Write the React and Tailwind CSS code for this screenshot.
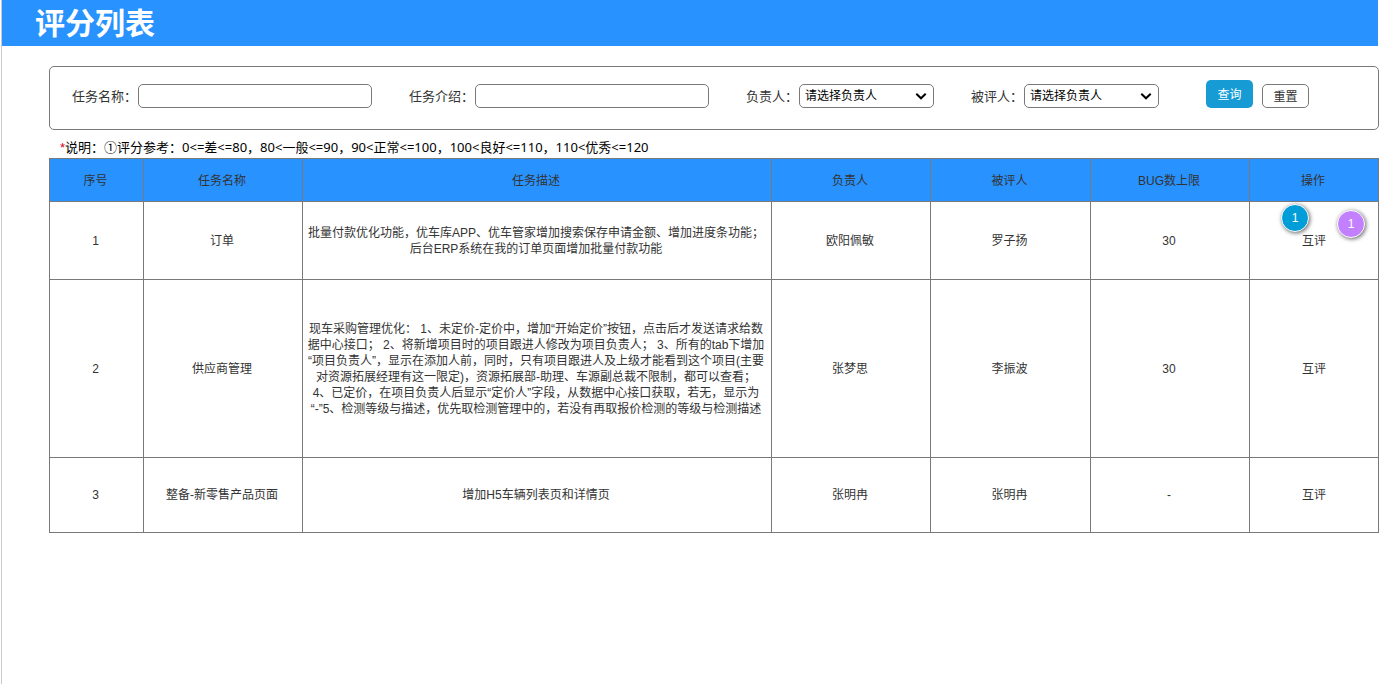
import { useState } from "react";

const COLUMNS = [
  { label: "序号", width: "w-[94px]" },
  { label: "任务名称", width: "w-[159px]" },
  { label: "任务描述", width: "" },
  { label: "负责人", width: "w-[159px]" },
  { label: "被评人", width: "w-[160px]" },
  { label: "BUG数上限", width: "w-[159px]" },
  { label: "操作", width: "w-[129px]" },
];

const TASKS = [
  {
    id: 1,
    name: "订单",
    desc: "批量付款优化功能，优车库APP、优车管家增加搜索保存申请金额、增加进度条功能；后台ERP系统在我的订单页面增加批量付款功能",
    owner: "欧阳佩敏",
    target: "罗子扬",
    bugLimit: "30",
    height: "h-[78px]",
    marked: true,
  },
  {
    id: 2,
    name: "供应商管理",
    desc: "现车采购管理优化： 1、未定价-定价中，增加“开始定价”按钮，点击后才发送请求给数据中心接口； 2、将新增项目时的项目跟进人修改为项目负责人； 3、所有的tab下增加“项目负责人”，显示在添加人前，同时，只有项目跟进人及上级才能看到这个项目(主要对资源拓展经理有这一限定)，资源拓展部-助理、车源副总裁不限制，都可以查看；\n4、已定价，在项目负责人后显示“定价人”字段，从数据中心接口获取，若无，显示为\n“-”5、检测等级与描述，优先取检测管理中的，若没有再取报价检测的等级与检测描述",
    owner: "张梦思",
    target: "李振波",
    bugLimit: "30",
    height: "h-[178px]",
  },
  {
    id: 3,
    name: "整备-新零售产品页面",
    desc: "增加H5车辆列表页和详情页",
    owner: "张明冉",
    target: "张明冉",
    bugLimit: "-",
    height: "h-[75px]",
  },
];

function TextField({ id, label, value, onChange }) {
  return (
    <div className="flex items-end gap-px">
      <label htmlFor={id} className="shrink-0 text-[13px] leading-[22px]">
        {label}
      </label>
      <input
        id={id}
        type="text"
        value={value}
        onChange={(e) => onChange(e.target.value)}
        className="h-6 w-[234px] min-w-0 rounded-[5px] border border-[#797979] bg-white px-1 text-xs text-black"
      />
    </div>
  );
}

function SelectField({ id, label }) {
  return (
    <div className="flex items-end gap-px">
      <label htmlFor={id} className="shrink-0 text-[13px] leading-[22px]">
        {label}
      </label>
      <div className="relative">
        <select
          id={id}
          className="block h-6 w-[135px] appearance-none rounded-[5px] border border-[#797979] bg-white pl-[5px] text-xs text-black"
        >
          <option>请选择负责人</option>
        </select>
        <svg
          viewBox="0 0 12 8"
          className="pointer-events-none absolute top-2 right-[7px] h-2 w-3 fill-none stroke-black stroke-2"
          aria-hidden="true"
        >
          <path d="M1.3 1.8 6 6.3l4.7-4.5" />
        </svg>
      </div>
    </div>
  );
}

function Marker({ className, children }) {
  return (
    <span
      className={`absolute flex size-7 items-center justify-center rounded-full border border-white text-xs text-white shadow-[1px_1px_4px_rgba(0,0,0,0.6)] ${className}`}
    >
      {children}
    </span>
  );
}

export default function App() {
  const [name, setName] = useState("");
  const [intro, setIntro] = useState("");

  const reset = () => {
    setName("");
    setIntro("");
  };

  return (
    <div
      lang="zh-CN"
      className="ml-px min-h-screen border-l border-[#ccc] bg-white pr-[18px] font-['Liberation_Sans','Noto_Sans_CJK_SC',sans-serif] text-[#333]"
    >
      <header className="mr-px flex h-[46px] items-center bg-[#2892ff] pt-0.5 pl-[33px]">
        <h1 className="text-[30px] leading-[44px] font-bold text-white">评分列表</h1>
      </header>

      <main className="pt-5 pl-[47px]">
        <form
          onSubmit={(e) => e.preventDefault()}
          className="flex h-16 items-end gap-[37px] rounded-[5px] border border-[#797979] pb-[21px] pl-[22px]"
        >
          <TextField id="task-name" label="任务名称：" value={name} onChange={setName} />
          <TextField id="task-intro" label="任务介绍：" value={intro} onChange={setIntro} />
          <SelectField id="owner" label="负责人：" />
          <SelectField id="target" label="被评人：" />
          <div className="ml-2.5 flex items-end gap-[9px]">
            <button type="submit" className="h-7 w-[47px] rounded-[5px] bg-[#169bd5] pt-0.5 text-xs text-white">
              查询
            </button>
            <button
              type="button"
              onClick={reset}
              className="h-6 w-[47px] rounded-[5px] border border-[#797979] bg-white pt-0.5 text-xs"
            >
              重置
            </button>
          </div>
        </form>

        <p className="h-7 pt-1.5 pl-[11px] font-['Noto_Sans','Noto_Sans_CJK_SC',sans-serif] text-[13px] leading-[22px] text-black">
          <span className="font-['Liberation_Sans',sans-serif] text-[#d9001b]">*</span>
          说明：①评分参考：0&lt;=差&lt;=80，80&lt;一般&lt;=90，90&lt;正常&lt;=100，100&lt;良好&lt;=110，110&lt;优秀&lt;=120
        </p>

        <table className="w-full table-fixed border-collapse text-center text-xs">
          <thead>
            <tr className="h-[43px]">
              {COLUMNS.map((c) => (
                <th
                  key={c.label}
                  className={`border border-[#797979] bg-[#2892ff] bg-clip-padding pt-0.5 pr-0.5 font-normal ${c.width}`}
                >
                  {c.label}
                </th>
              ))}
            </tr>
          </thead>
          <tbody>
            {TASKS.map((t) => (
              <tr key={t.id} className={t.height}>
                <td className="border border-[#797979] pr-0.5">{t.id}</td>
                <td className="border border-[#797979] pr-0.5">{t.name}</td>
                <td className="border border-[#797979] pr-1 pl-0.5 whitespace-pre-line">{t.desc}</td>
                <td className="border border-[#797979] pr-0.5">{t.owner}</td>
                <td className="border border-[#797979] pr-0.5">{t.target}</td>
                <td className="border border-[#797979] pr-0.5">{t.bugLimit}</td>
                <td className="relative border border-[#797979]">
                  <a href="#review">互评</a>
                  {t.marked && (
                    <>
                      <Marker className="top-0.5 right-[69px] bg-[#009dd9]">1</Marker>
                      <Marker className="top-2 right-[13px] bg-[#c280ff]">1</Marker>
                    </>
                  )}
                </td>
              </tr>
            ))}
          </tbody>
        </table>
      </main>
    </div>
  );
}
